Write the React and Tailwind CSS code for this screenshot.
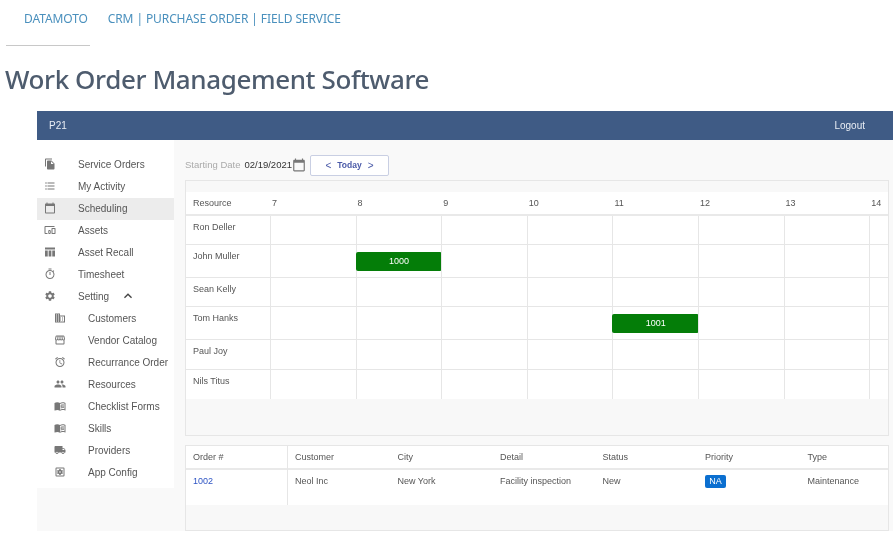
import {
  MdFileCopy,
  MdFormatListBulleted,
  MdCalendarToday,
  MdOutlineDevicesOther,
  MdOutlineTimer,
  MdSettings,
  MdKeyboardArrowUp,
  MdBusiness,
  MdOutlineStorefront,
  MdOutlineAlarm,
  MdPeople,
  MdMenuBook,
  MdLocalShipping,
  MdOutlineSettingsApplications,
} from "react-icons/md";

const RecallIcon = ({ className }) => (
  <svg viewBox="0 0 24 24" fill="currentColor" className={className}>
    <path d="M2 3h20v4H2z" />
    <path d="M2 9h5.5v12H2zM9.25 9h5.5v12h-5.5zM16.5 9H22v12h-5.5z" />
  </svg>
);

const mainMenu = [
  { label: "Service Orders", icon: MdFileCopy },
  { label: "My Activity", icon: MdFormatListBulleted },
  { label: "Scheduling", icon: MdCalendarToday, active: true },
  { label: "Assets", icon: MdOutlineDevicesOther },
  { label: "Asset Recall", icon: RecallIcon },
  { label: "Timesheet", icon: MdOutlineTimer },
  { label: "Setting", icon: MdSettings, open: true },
];

const subMenu = [
  { label: "Customers", icon: MdBusiness },
  { label: "Vendor Catalog", icon: MdOutlineStorefront },
  { label: "Recurrance Order", icon: MdOutlineAlarm },
  { label: "Resources", icon: MdPeople },
  { label: "Checklist Forms", icon: MdMenuBook },
  { label: "Skills", icon: MdMenuBook },
  { label: "Providers", icon: MdLocalShipping },
  { label: "App Config", icon: MdOutlineSettingsApplications },
];

const hours = [7, 8, 9, 10, 11, 12, 13];

const resources = [
  { name: "Ron Deller", height: "h-[29px]" },
  { name: "John Muller", height: "h-[33px]", start: 8, order: "1000" },
  { name: "Sean Kelly", height: "h-[29px]" },
  { name: "Tom Hanks", height: "h-[33px]", start: 11, order: "1001" },
  { name: "Paul Joy", height: "h-[30px]" },
  { name: "Nils Titus", height: "h-[29px]" },
];

const columns = ["Customer", "City", "Detail", "Status", "Priority", "Type"];

const SideItem = ({ item, sub }) => {
  const Icon = item.icon;
  return (
    <div
      className={`flex h-[22px] items-center pb-[2px] ${sub ? "pl-[17px]" : "pl-[7px]"} ${
        item.active ? "bg-[#ececec]" : ""
      }`}
    >
      <Icon className="h-3 w-3 shrink-0 text-[#777]" />
      <span className="ml-[22px] text-[10px] text-[#555]">{item.label}</span>
      {item.open && <MdKeyboardArrowUp className="ml-[11px] h-4 w-4 text-[#444]" />}
    </div>
  );
};

const ResourceRow = ({ row }) => (
  <div className={`flex ${row.height} border-b border-[#e6e6e6] bg-white last:border-b-0`}>
    <div className="w-[84px] shrink-0 pl-[7px] pt-[5px] text-[9px] leading-3 text-[#555]">
      {row.name}
    </div>
    {hours.map((h) => (
      <div key={h} className="w-[85.6px] shrink-0 border-l border-[#e6e6e6] pt-[7px]">
        {row.start === h && (
          <div className="-ml-px flex h-[19px] w-[86.6px] items-center justify-center rounded-[2px] bg-[#047d08] text-[9px] text-white">
            {row.order}
          </div>
        )}
      </div>
    ))}
    <div className="flex-1 border-l border-[#e6e6e6]" />
  </div>
);

export default function App() {
  return (
    <div className="h-[533px] w-[895px] overflow-hidden bg-white font-['Liberation_Sans',sans-serif] blur-[0.3px]">
      <div className="flex h-[38px] items-center gap-[20px] pl-6 font-['Noto_Sans',sans-serif] text-[12px] tracking-[-0.1px] text-[#4a90bd]">
        <span>DATAMOTO</span>
        <span>CRM | PURCHASE ORDER | FIELD SERVICE</span>
      </div>
      <div className="ml-[6px] mt-[7px] h-px w-[84px] bg-[#c8c8c8]" />
      <h1 className="ml-[5px] mt-[10px] h-[55px] font-['Noto_Sans',sans-serif] text-[26px] font-medium leading-[46px] tracking-[-0.4px] text-[#4e5c6e]">
        Work Order Management Software
      </h1>

      <div className="ml-[37px] w-[856px]">
        <div className="flex h-[29px] items-center justify-between bg-[#3f5b85] pl-3 pr-7 text-[10px] text-[#e8edf4]">
          <span>P21</span>
          <span>Logout</span>
        </div>

        <div className="flex h-[391px] bg-[#f9f9f9]">
          <aside className="w-[137px] shrink-0">
            <div className="h-[348px] bg-white pt-[14px]">
              {mainMenu.map((item) => (
                <SideItem key={item.label} item={item} />
              ))}
              {subMenu.map((item) => (
                <SideItem key={item.label} item={item} sub />
              ))}
            </div>
          </aside>

          <main className="min-w-0 flex-1 pl-[11px] pr-1">
            <div className="flex h-[40px] items-center pt-[10px]">
              <span className="text-[9.5px] text-[#aaa]">Starting Date</span>
              <span className="ml-[4px] text-[9.5px] text-[#333]">02/19/2021</span>
              <MdCalendarToday className="h-[14px] w-[14px] text-[#777]" />
              <button className="ml-[4px] flex h-[21px] w-[79px] items-center justify-center gap-[6px] rounded-[2px] border border-[#c9cfe3] bg-white text-[#4a5aa8]">
                <span className="text-[10px]">&lt;</span>
                <span className="text-[8.5px] font-bold">Today</span>
                <span className="text-[10px]">&gt;</span>
              </button>
            </div>

            <section className="h-[256px] border border-[#e6e6e6] bg-[#f8f8f8] pt-[11px]">
              <div className="flex h-[24px] items-center border-b-2 border-[#e9e9e9] bg-white pt-px text-[9px] text-[#555]">
                <span className="w-[86px] shrink-0 pl-[7px]">Resource</span>
                {hours.map((h) => (
                  <span key={h} className="w-[85.6px] shrink-0">
                    {h}
                  </span>
                ))}
                <span>14</span>
              </div>
              {resources.map((row) => (
                <ResourceRow key={row.name} row={row} />
              ))}
            </section>

            <section className="mt-[9px] h-[86px] border border-[#e6e6e6] bg-[#f8f8f8]">
              <div className="flex h-[59px] bg-white text-[9px] text-[#555]">
                <div className="w-[102px] shrink-0 border-r border-[#e6e6e6]">
                  <div className="flex h-[24px] items-center border-b-2 border-[#e9e9e9] pl-[7px] pt-px">
                    Order #
                  </div>
                  <div className="pl-[7px] pt-[5px] text-[#2f55c4]">1002</div>
                </div>
                <div className="min-w-0 flex-1">
                  <div className="grid h-[24px] grid-cols-[102.5px_102.5px_102.5px_102.5px_102.5px_1fr] items-center border-b-2 border-[#e9e9e9] pl-[7px] pt-px">
                    {columns.map((c) => (
                      <span key={c}>{c}</span>
                    ))}
                  </div>
                  <div className="grid grid-cols-[102.5px_102.5px_102.5px_102.5px_102.5px_1fr] items-start pl-[7px] pt-[5px]">
                    <span>Neol Inc</span>
                    <span>New York</span>
                    <span>Facility inspection</span>
                    <span>New</span>
                    <span>
                      <span className="inline-flex h-[13px] w-[21px] items-center justify-center rounded-[2px] bg-[#0b6fd0] text-[9px] text-white">
                        NA
                      </span>
                    </span>
                    <span>Maintenance</span>
                  </div>
                </div>
              </div>
            </section>
          </main>
        </div>
      </div>
    </div>
  );
}
